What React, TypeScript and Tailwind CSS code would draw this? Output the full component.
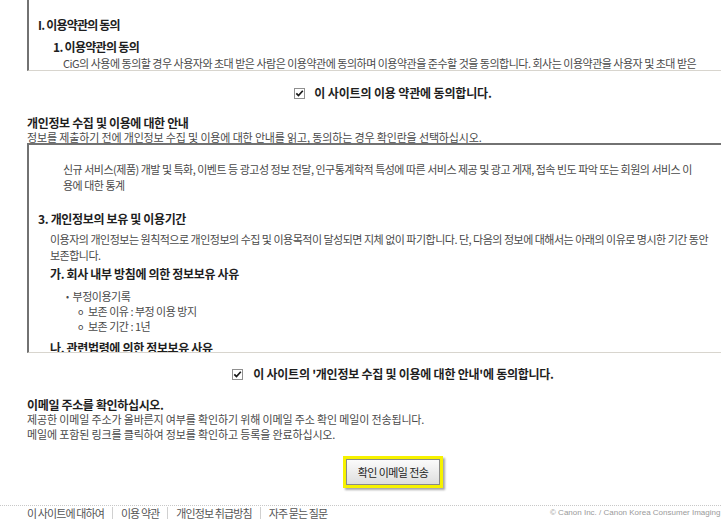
import React from "react";

const K = "font-['Noto_Sans_CJK_KR',sans-serif]";
const BB = "text-[12px] font-bold text-[#1e1e1e] whitespace-nowrap";
const B = `${BB} tracking-[-0.35px]`;
const N = "text-[11px] tracking-[-0.15px] text-[#4a4a4a] whitespace-nowrap";
const NI = "text-[11px] tracking-[-0.5px] text-[#4a4a4a] whitespace-nowrap";

function Check() {
  return (
    <span className="inline-flex h-[11px] w-[11px] shrink-0 items-center justify-center border border-[#8f8f8f] bg-white">
      <svg width="9" height="9" viewBox="0 0 9 9">
        <path d="M1.3 4.3 L3.5 6.6 L7.8 1.8" stroke="#1a1a1a" strokeWidth="1.7" fill="none" />
      </svg>
    </span>
  );
}

export default function App() {
  return (
    <div className={`h-[526px] w-[721px] overflow-hidden bg-white ${K}`}>
      <div className="ml-[27px] w-[732px]">
        {/* box 1 */}
        <div className="h-[71px] overflow-hidden border-b border-l-2 border-b-[#d8d5ce] border-l-[#727272] pt-[17px]">
          <div className={`h-[16px] pl-[9px] leading-[16px] ${BB} tracking-[-0.8px]`}>I. 이용약관의 동의</div>
          <div className={`mt-[6px] h-[16px] pl-[24px] leading-[16px] ${BB} tracking-[-0.7px]`}>1. 이용약관의 동의</div>
          <div className={`mt-[3px] h-[11px] pl-[34px] leading-[11px] ${NI}`}>
            CiG의 사용에 동의할 경우 사용자와 초대 받은 사람은 이용약관에 동의하며 이용약관을 준수할 것을 동의합니다. 회사는 이용약관을 사용자 및 초대 받은
          </div>
        </div>

        <div className="mt-[14px] flex h-[16px] items-center justify-center gap-[9px]">
          <Check />
          <span className={`leading-[16px] ${BB} tracking-[-0.15px]`}>이 사이트의 이용 약관에 동의합니다.</span>
        </div>

        <div className={`mt-[15px] h-[14px] leading-[14px] ${B}`}>개인정보 수집 및 이용에 대한 안내</div>
        <div className={`mt-[1px] h-[13px] leading-[13px] ${N}`}>
          정보를 제출하기 전에 개인정보 수집 및 이용에 대한 안내를 읽고, 동의하는 경우 확인란을 선택하십시오.
        </div>

        {/* box 2 */}
        <div className="mt-[-1px] h-[210px] overflow-hidden border-b border-l-2 border-t-2 border-b-[#d8d5ce] border-l-[#727272] border-t-[#727272] pt-[16px]">
          <div className={`h-[16px] pl-[34px] leading-[16px] ${NI}`}>
            신규 서비스(제품) 개발 및 특화, 이벤트 등 광고성 정보 전달, 인구통계학적 특성에 따른 서비스 제공 및 광고 게재, 접속 빈도 파악 또는 회원의 서비스 이
          </div>
          <div className={`h-[16px] pl-[34px] leading-[16px] ${NI}`}>용에 대한 통계</div>
          <div className={`mt-[18px] h-[16px] pl-[9px] leading-[16px] ${B}`}>3. 개인정보의 보유 및 이용기간</div>
          <div className={`mt-[4px] h-[16px] pl-[21px] leading-[16px] ${NI}`}>
            이용자의 개인정보는 원칙적으로 개인정보의 수집 및 이용목적이 달성되면 지체 없이 파기합니다. 단, 다음의 정보에 대해서는 아래의 이유로 명시한 기간 동안
          </div>
          <div className={`h-[16px] pl-[21px] leading-[16px] ${NI}`}>보존합니다.</div>
          <div className={`mt-[3px] h-[16px] pl-[21px] leading-[16px] ${B}`}>가. 회사 내부 방침에 의한 정보보유 사유</div>
          <div className={`mt-[7px] flex h-[15px] items-center pl-[37px] leading-[15px] ${NI}`}>
            <span className="mr-[4px] text-[9px]">•</span>부정이용기록
          </div>
          <div className={`flex h-[15px] items-center pl-[49px] leading-[15px] ${NI}`}>
            <span className="mr-[5px] text-[9px]">o</span>보존 이유 : 부정 이용 방지
          </div>
          <div className={`flex h-[15px] items-center pl-[49px] leading-[15px] ${NI}`}>
            <span className="mr-[5px] text-[9px]">o</span>보존 기간 : 1년
          </div>
          <div className={`mt-[6px] h-[16px] pl-[21px] leading-[16px] ${B}`}>나. 관련법령에 의한 정보보유 사유</div>
        </div>

        <div className="mt-[13px] flex h-[16px] items-center justify-center gap-[10px]">
          <Check />
          <span className={`leading-[16px] ${BB} tracking-[-0.25px]`}>이 사이트의 '개인정보 수집 및 이용에 대한 안내'에 동의합니다.</span>
        </div>

        <div className={`mt-[15px] h-[15px] leading-[15px] ${B}`}>이메일 주소를 확인하십시오.</div>
        <div className={`h-[15px] leading-[15px] ${N}`}>
          제공한 이메일 주소가 올바른지 여부를 확인하기 위해 이메일 주소 확인 메일이 전송됩니다.
        </div>
        <div className={`h-[15px] leading-[15px] ${N}`}>
          메일에 포함된 링크를 클릭하여 정보를 확인하고 등록을 완료하십시오.
        </div>

        <div className="mt-[14px] flex justify-center">
          <div className="h-[32px] w-[100px] border-[3px] border-[#f6f200] shadow-[2px_2px_2px_rgba(0,0,0,0.35)]">
            <div className="flex h-full w-full items-center justify-center border border-[#8a8a8a] bg-gradient-to-b from-[#fbfbfb] to-[#dedede] text-[11px] tracking-[-0.6px] text-[#222] whitespace-nowrap">
              확인 이메일 전송
            </div>
          </div>
        </div>
      </div>

      {/* footer */}
      <div className="mt-[17px] border-t border-dotted border-t-[#c8c8c8]">
        <div className="flex h-[14px] items-center pl-[27px]">
          <div className="flex w-[523px] shrink-0 items-center text-[11px] leading-[14px] tracking-[-0.9px] text-[#555] whitespace-nowrap">
            <span>이 사이트에 대하여</span>
            <span className="mx-[8px] h-[12px] w-px bg-[#d0d0d0]" />
            <span>이용 약관</span>
            <span className="mx-[8px] h-[12px] w-px bg-[#d0d0d0]" />
            <span>개인정보 취급방침</span>
            <span className="mx-[8px] h-[12px] w-px bg-[#d0d0d0]" />
            <span>자주 묻는 질문</span>
          </div>
          <span className="shrink-0 font-['Liberation_Sans',Arial,sans-serif] text-[8px] leading-[14px] text-[#9a9a9a] whitespace-nowrap">
            © Canon Inc. / Canon Korea Consumer Imaging
          </span>
        </div>
      </div>
    </div>
  );
}
